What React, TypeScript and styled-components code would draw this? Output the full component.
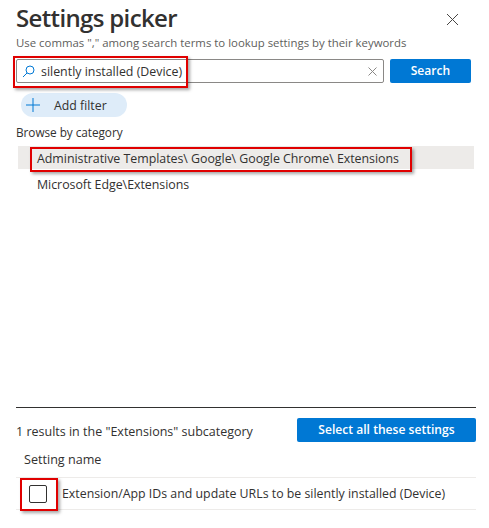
import React from "react";
import styled, { createGlobalStyle } from "styled-components";

const Global = createGlobalStyle`
  html, body { margin: 0; padding: 0; background: #fff; }
  body { font-family: "Open Sans", "Noto Sans", sans-serif; color: #323130; }
  * { box-sizing: border-box; }
`;

const Page = styled.div`
  position: relative;
  width: 489px;
  height: 528px;
  overflow: hidden;
  padding: 3px 13px 0 16px;
`;

const Header = styled.div`
  display: flex;
  justify-content: space-between;
  align-items: flex-start;
  height: 30px;
`;

const Title = styled.h1`
  margin: 0;
  font-size: 24px;
  line-height: 30px;
  font-weight: 600;
  letter-spacing: -0.65px;
  color: #323130;
`;

const CloseButton = styled.button`
  display: flex;
  border: 0;
  padding: 0;
  margin: 10px 17px 0 0;
  background: none;
  color: #484644;
`;

const Hint = styled.p`
  margin: 1px 0 0;
  font-size: 11.4px;
  line-height: 17px;
  color: #605e5c;
`;

const SearchRow = styled.div`
  display: flex;
  gap: 6px;
  margin-top: 8px;
  padding-right: 5px;
`;

const SearchBox = styled.div`
  flex: 1;
  height: 24px;
  display: flex;
  align-items: center;
  gap: 6px;
  padding: 0 6px 0 5px;
  border: 1px solid #8a8886;
  border-radius: 2px;
`;

const SearchText = styled.span`
  flex: 1;
  font-size: 12.4px;
  color: #323130;
`;

const PrimaryButton = styled.button<{ $width: number }>`
  width: ${p => p.$width}px;
  height: 24px;
  border: 0;
  border-radius: 2px;
  padding: 0 0 2px;
  background: #0078d4;
  color: #fff;
  font: 600 12.1px "Open Sans", sans-serif;
`;

const AddFilter = styled.button`
  display: flex;
  align-items: center;
  gap: 14px;
  width: 106px;
  height: 24px;
  margin: 10px 0 0 5px;
  padding: 0 0 0 5px;
  border: 0;
  border-radius: 12px;
  background: #deecf9;
  color: #323130;
  font: 12.3px "Open Sans", sans-serif;
`;

const SectionLabel = styled.div`
  margin-top: 7px;
  font-size: 11.8px;
  line-height: 17px;
  font-weight: 500;
  letter-spacing: -0.05px;
  color: #323130;
`;

const CategoryList = styled.div`
  margin: 5px 2px 0 2px;
  height: 261px;
`;

const CategoryItem = styled.div<{ $selected?: boolean }>`
  height: 23px;
  line-height: 25px;
  padding-left: 19px;
  margin-bottom: 3px;
  font-size: 12.4px;
  letter-spacing: -0.03px;
  color: #323130;
  background: ${p => (p.$selected ? "#edebe9" : "transparent")};
`;

const ResultsPanel = styled.div`
  border-top: 1px solid #323130;
`;

const ResultsBar = styled.div`
  display: flex;
  justify-content: space-between;
  align-items: center;
  margin-top: 10px;
`;

const ResultsText = styled.span`
  font-size: 12.5px;
  font-weight: 500;
  padding-top: 2px;
`;

const ColumnHead = styled.div`
  height: 36px;
  padding: 9px 0 0 8px;
  font-size: 12.6px;
  line-height: 17px;
  font-weight: 500;
  border-bottom: 1px solid #edebe9;
`;

const SettingRow = styled.div`
  display: flex;
  align-items: center;
  gap: 15px;
  height: 32px;
  padding-left: 13px;
  border-bottom: 1px solid #edebe9;
  font-size: 12.35px;
`;

const Check = styled.span`
  width: 18px;
  height: 18px;
  border: 1px solid #323130;
  border-radius: 2px;
  flex: none;
`;

const Callout = styled.div<{ $x: number; $y: number; $w: number; $h: number }>`
  position: absolute;
  left: ${p => p.$x}px;
  top: ${p => p.$y}px;
  width: ${p => p.$w}px;
  height: ${p => p.$h}px;
  border: 2px solid #e00000;
  box-shadow: 2px 2px 3px rgba(0, 0, 0, 0.35);
`;

export default function App() {
  return (
    <Page>
      <Global />
      <Header>
        <Title>Settings picker</Title>
        <CloseButton aria-label="Close">
          <svg width="13" height="13" viewBox="0 0 13 13" fill="none" stroke="currentColor" strokeWidth="1">
            <path d="M1 1l11 11M12 1L1 12" />
          </svg>
        </CloseButton>
      </Header>
      <Hint>Use commas "," among search terms to lookup settings by their keywords</Hint>
      <SearchRow>
        <SearchBox>
          <svg width="13" height="13" viewBox="0 0 13 13" fill="none" stroke="#0078d4" strokeWidth="1">
            <circle cx="8" cy="5" r="4" />
            <path d="M5 8l-4 4" />
          </svg>
          <SearchText>silently installed (Device)</SearchText>
          <svg width="9" height="9" viewBox="0 0 9 9" fill="none" stroke="#8a8886" strokeWidth="1">
            <path d="M.5.5l8 8M8.5.5l-8 8" />
          </svg>
        </SearchBox>
        <PrimaryButton $width={81}>Search</PrimaryButton>
      </SearchRow>
      <AddFilter>
        <svg width="14" height="14" viewBox="0 0 14 14" fill="none" stroke="#0078d4" strokeWidth="1">
          <path d="M7 0v14M0 7h14" />
        </svg>
        Add filter
      </AddFilter>
      <SectionLabel>Browse by category</SectionLabel>
      <CategoryList>
        <CategoryItem $selected>Administrative Templates\ Google\ Google Chrome\ Extensions</CategoryItem>
        <CategoryItem>Microsoft Edge\Extensions</CategoryItem>
      </CategoryList>
      <ResultsPanel>
        <ResultsBar>
          <ResultsText>1 results in the "Extensions" subcategory</ResultsText>
          <PrimaryButton $width={179}>Select all these settings</PrimaryButton>
        </ResultsBar>
        <ColumnHead>Setting name</ColumnHead>
        <SettingRow>
          <Check />
          Extension/App IDs and update URLs to be silently installed (Device)
        </SettingRow>
      </ResultsPanel>
      <Callout $x={13} $y={56} $w={175} $h={32} />
      <Callout $x={30} $y={147} $w={382} $h={25} />
      <Callout $x={20} $y={478} $w={38} $h={33} />
    </Page>
  );
}
